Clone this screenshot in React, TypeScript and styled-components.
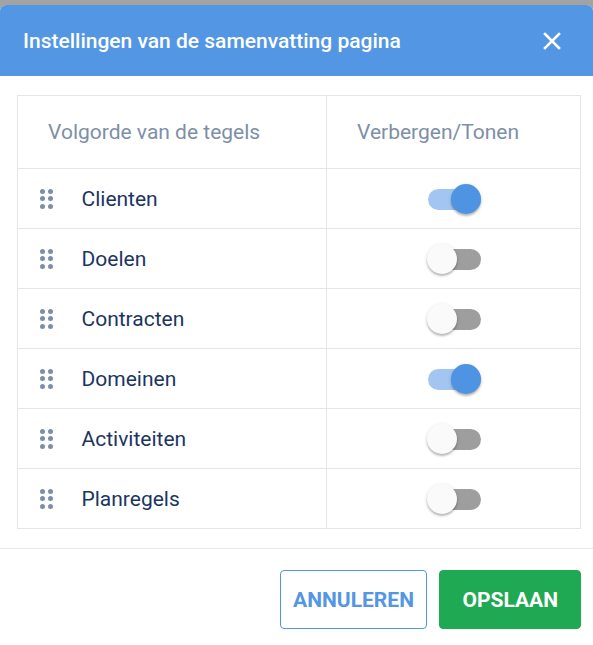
import React, { useState } from "react";
import styled, { createGlobalStyle } from "styled-components";

const Global = createGlobalStyle`
  html, body { margin: 0; padding: 0; background: #a3a3a3; }
  body { font-family: Roboto, "Noto Sans", Arial, sans-serif; }
  * { box-sizing: border-box; }
`;

const Dialog = styled.div`
  margin-top: 5px;
  width: 593px;
  height: 640px;
  background: #fff;
  border-radius: 6px 6px 0 0;
  overflow: hidden;
  display: flex;
  flex-direction: column;
`;

const Header = styled.div`
  height: 71px;
  background: #5296e4;
  display: flex;
  align-items: center;
  justify-content: space-between;
  padding: 0 30px 0 23px;
`;

const Title = styled.h1`
  margin: 0;
  color: #fff;
  font-size: 21px;
  font-weight: 500;
  letter-spacing: 0;
`;

const CloseButton = styled.button`
  border: none;
  background: none;
  padding: 0;
  width: 22px;
  height: 22px;
  display: flex;
  align-items: center;
  justify-content: center;
  cursor: pointer;
`;

const Body = styled.div`
  padding: 19px 12px 19px 17px;
  border-bottom: 1px solid #e6e8ec;
`;

const Table = styled.div`
  border: 1px solid #e4e6ea;
  display: grid;
  grid-template-columns: 309px 1fr;
`;

const HeadCell = styled.div<{ $last?: boolean }>`
  height: 73px;
  display: flex;
  align-items: center;
  padding-left: 30px;
  color: #7d8fa8;
  font-size: 21px;
  border-bottom: 1px solid #e4e6ea;
  border-right: ${(p) => (p.$last ? "none" : "1px solid #e4e6ea")};
`;

const NameCell = styled.div<{ $last?: boolean }>`
  height: ${(p) => (p.$last ? "59px" : "60px")};
  display: flex;
  align-items: center;
  padding-left: 22px;
  gap: 29px;
  color: #1b3563;
  font-size: 21px;
  border-right: 1px solid #e4e6ea;
  border-bottom: ${(p) => (p.$last ? "none" : "1px solid #e4e6ea")};
`;

const ToggleCell = styled.div<{ $last?: boolean }>`
  height: ${(p) => (p.$last ? "59px" : "60px")};
  display: flex;
  align-items: center;
  padding-left: 100px;
  border-bottom: ${(p) => (p.$last ? "none" : "1px solid #e4e6ea")};
`;

const Handle = styled.div`
  display: grid;
  grid-template-columns: 5px 5px;
  grid-template-rows: 5px 5px 5px;
  column-gap: 2.5px;
  row-gap: 2.5px;
  span {
    width: 5px;
    height: 5px;
    border-radius: 50%;
    background: #7d8fa8;
  }
`;

const Switch = styled.button<{ $on: boolean }>`
  position: relative;
  width: 54px;
  height: 30px;
  border: none;
  background: none;
  padding: 0;
  cursor: pointer;
  &::before {
    content: "";
    position: absolute;
    left: 1px;
    top: 5px;
    width: 53px;
    height: 21px;
    border-radius: 11px;
    background: ${(p) => (p.$on ? "#a2c6f1" : "#9e9e9e")};
  }
`;

const Thumb = styled.span<{ $on: boolean }>`
  position: absolute;
  top: 0;
  left: ${(p) => (p.$on ? "24px" : "0")};
  width: 30px;
  height: 30px;
  border-radius: 50%;
  background: ${(p) => (p.$on ? "#4f93e3" : "#fafafa")};
  box-shadow: 0 2px 2px rgba(0, 0, 0, 0.22), 0 1px 4px rgba(0, 0, 0, 0.12);
`;

const Footer = styled.div`
  display: flex;
  justify-content: flex-end;
  gap: 12px;
  padding: 21px 12px 0 0;
`;

const Button = styled.button<{ $primary?: boolean }>`
  height: 59px;
  padding: 0 ${(p) => (p.$primary ? "22px" : "12.5px")};
  border-radius: 4px;
  font-family: Roboto, Arial, sans-serif;
  font-size: 21px;
  font-weight: 700;
  letter-spacing: 0;
  cursor: pointer;
  border: 1px solid ${(p) => (p.$primary ? "#1fa953" : "#5296e4")};
  background: ${(p) => (p.$primary ? "#1fa953" : "#fff")};
  color: ${(p) => (p.$primary ? "#fff" : "#5296e4")};
`;

const rowsInit = [
  { name: "Clienten", on: true },
  { name: "Doelen", on: false },
  { name: "Contracten", on: false },
  { name: "Domeinen", on: true },
  { name: "Activiteiten", on: false },
  { name: "Planregels", on: false },
];

export default function App() {
  const [rows, setRows] = useState(rowsInit);
  const toggle = (i: number) =>
    setRows((r) => r.map((x, j) => (j === i ? { ...x, on: !x.on } : x)));
  return (
    <>
      <Global />
      <Dialog>
        <Header>
          <Title>Instellingen van de samenvatting pagina</Title>
          <CloseButton aria-label="Sluiten">
            <svg width="18" height="18" viewBox="0 0 18 18">
              <path d="M2 2 L16 16 M16 2 L2 16" stroke="#fff" strokeWidth="2.6" strokeLinecap="square" />
            </svg>
          </CloseButton>
        </Header>
        <Body>
          <Table>
            <HeadCell>Volgorde van de tegels</HeadCell>
            <HeadCell $last>Verbergen/Tonen</HeadCell>
            {rows.map((r, i) => {
              const last = i === rows.length - 1;
              return (
                <React.Fragment key={r.name}>
                  <NameCell $last={last}>
                    <Handle>
                      {Array.from({ length: 6 }).map((_, k) => (
                        <span key={k} />
                      ))}
                    </Handle>
                    {r.name}
                  </NameCell>
                  <ToggleCell $last={last}>
                    <Switch $on={r.on} onClick={() => toggle(i)}>
                      <Thumb $on={r.on} />
                    </Switch>
                  </ToggleCell>
                </React.Fragment>
              );
            })}
          </Table>
        </Body>
        <Footer>
          <Button>ANNULEREN</Button>
          <Button $primary>OPSLAAN</Button>
        </Footer>
      </Dialog>
    </>
  );
}
